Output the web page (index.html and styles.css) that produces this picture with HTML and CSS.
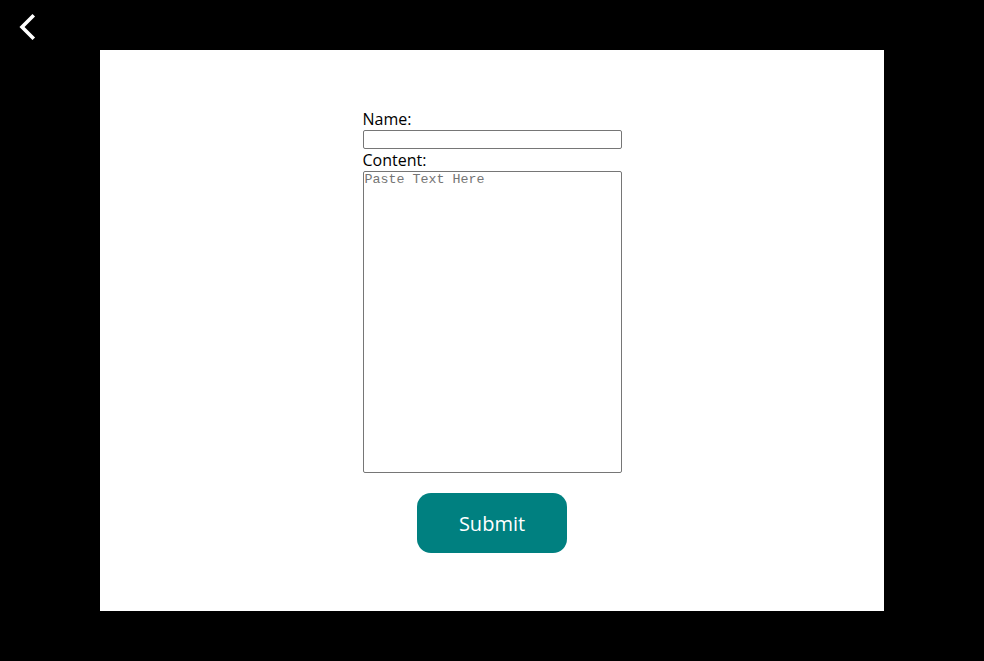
FILE: index.html
```html
<!DOCTYPE html>
<html>
<head>
<meta charset="utf-8">
<link rel="stylesheet" href="styles.css">
</head>
<body>
<div class="page">
  <a class="back" href="#" aria-label="Back">
    <svg width="40" height="40" viewBox="0 0 40 40"><path d="M32.5 16.5 L22 27 L32.5 37.5" fill="none" stroke="#fff" stroke-width="3.6" stroke-linecap="square"/></svg>
  </a>
  <main class="card">
    <form class="form">
      <label class="label" for="name">Name:</label>
      <input class="input" id="name" type="text">
      <label class="label" for="content">Content:</label>
      <textarea class="textarea" id="content" placeholder="Paste Text Here"></textarea>
      <button class="submit" type="button">Submit</button>
    </form>
  </main>
</div>
</body>
</html>
```
FILE: styles.css
```css
html, body {
  margin: 0;
  padding: 0;
  background: #000;
  height: 100%;
}
.page {
  position: relative;
  padding: 50px 100px 50px 100px;
  font-family: "Open Sans", "Noto Sans", sans-serif;
}
.back {
  position: absolute;
  left: 0;
  top: 0;
  display: block;
  width: 40px;
  height: 40px;
}
.back svg {
  display: block;
}
.card {
  background: #fff;
  height: 561px;
  box-sizing: border-box;
  padding-top: 58px;
  display: flex;
  justify-content: center;
}
.form {
  width: 259px;
  display: flex;
  flex-direction: column;
}
.label {
  display: block;
  font-size: 16px;
  line-height: 22px;
  color: #000;
}
.input {
  display: block;
  box-sizing: border-box;
  width: 259px;
  height: 19px;
  margin: 0;
  padding: 1px 2px;
  border: 1px solid #767676;
  border-radius: 2px;
  font-family: "Liberation Mono", monospace;
  font-size: 13.333px;
}
.textarea {
  display: block;
  box-sizing: border-box;
  width: 259px;
  height: 302px;
  margin: 0;
  padding: 0 1px;
  border: 1px solid #767676;
  border-radius: 2px;
  font-family: "Liberation Mono", "Courier New", monospace;
  font-size: 13.333px;
  line-height: 15px;
  resize: none;
}
.textarea::placeholder {
  color: #757575;
}
.submit {
  align-self: center;
  margin-top: 20px;
  width: 150px;
  height: 60px;
  border: none;
  border-radius: 14px;
  background: #008080;
  color: #fff;
  font-family: "Open Sans", "Noto Sans", sans-serif;
  font-size: 20px;
  cursor: pointer;
}
```
